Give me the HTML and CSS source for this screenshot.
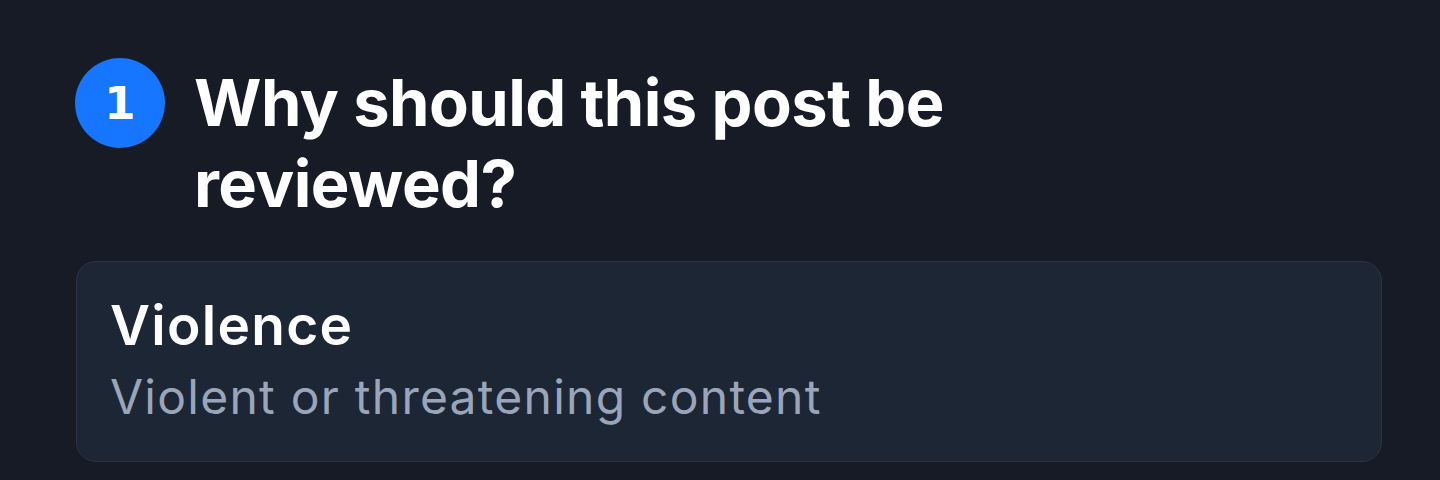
FILE: index.html
```html
<!DOCTYPE html>
<html lang="en">
<head>
<meta charset="utf-8">
<title>Report post</title>
<link rel="stylesheet" href="styles.css">
</head>
<body>
<main class="page">
  <div class="step">
    <div class="step-num">1</div>
    <h1 class="step-title">Why should this post be reviewed?</h1>
  </div>
  <div class="option">
    <div class="option-title">Violence</div>
    <div class="option-desc">Violent or threatening content</div>
  </div>
</main>
</body>
</html>
```
FILE: styles.css
```css
html, body {
  margin: 0;
  padding: 0;
  background: #161b26;
  height: 100%;
  overflow: hidden;
}
body {
  font-family: Inter, "Noto Sans", sans-serif;
  color: #ffffff;
}
.page {
  padding: 58px 58px 0 75px;
  display: flex;
  flex-direction: column;
  gap: 37px;
}
.step {
  display: flex;
  align-items: flex-start;
  gap: 29px;
}
.step-num {
  flex: 0 0 90px;
  width: 90px;
  height: 90px;
  border-radius: 50%;
  background: #1776ff;
  color: #fff;
  font-family: "DejaVu Sans", Inter, sans-serif;
  font-weight: 700;
  font-size: 45px;
  line-height: 1;
  display: flex;
  align-items: center;
  justify-content: center;
}
.step-title {
  margin: 4px 0 0;
  font-size: 65px;
  line-height: 81px;
  font-weight: 700;
  max-width: 800px;
  letter-spacing: -0.55px;
}
.option {
  margin-left: 1px;
  background: #1c2635;
  border: 1px solid #2a3646;
  border-radius: 20px;
  padding: 30px 32px 28px 33px;
  display: flex;
  flex-direction: column;
}
.option-title {
  font-size: 55px;
  line-height: 66px;
  font-weight: 600;
  letter-spacing: 1.3px;
}
.option-desc {
  margin-top: 3px;
  font-size: 48px;
  line-height: 72px;
  color: #9aa5b9;
  letter-spacing: 1.25px;
}
```
